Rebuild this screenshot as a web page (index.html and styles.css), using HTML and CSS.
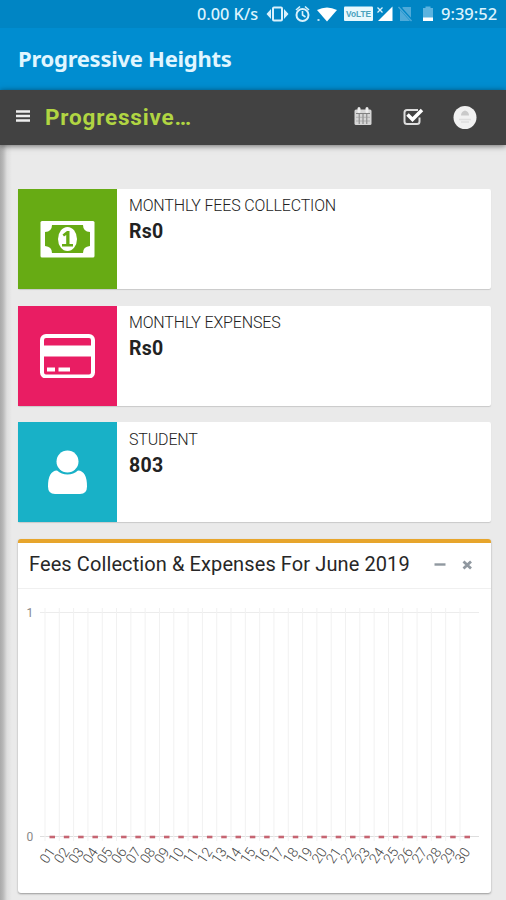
FILE: index.html
```html
<!DOCTYPE html>
<html lang="en">
<head>
<meta charset="utf-8">
<title>Progressive Heights</title>
<link rel="stylesheet" href="styles.css">
</head>
<body>
<div class="statusbar">
  <span class="speed">0.00 K/s</span>
  <svg class="status-icons" width="170" height="28" viewBox="266 0 170 28">
    <g fill="none" stroke="#d9f1fc" stroke-width="2">
      <rect x="273" y="7.500" width="9" height="13" rx="1"/>
      <circle cx="302.500" cy="15" r="6"/>
      <path d="M302.500 11v4l3 2M296 10l4-3.500M309 10l-4-3.500" stroke-width="1.600"/>
    </g>
    <path d="M271 9v10l-4.500-5zM284 9v10l4.500-5z" fill="#d9f1fc"/>
    <path d="M317 10q10-5 20 0L327 21.500z" fill="#fff"/>
    <rect x="317.500" y="19" width="2" height="2" fill="#b8e0f3"/>
    <rect x="344" y="6.500" width="29" height="14.500" rx="1" fill="#e8f8fd"/>
    <text x="346" y="17" class="volte" textLength="25" lengthAdjust="spacingAndGlyphs">VoLTE</text>
    <path d="M392.500 6.500V21H378z" fill="#fff"/>
    <path d="M377.500 7.500l5 5m0-5l-5 5" stroke="#d9f1fc" stroke-width="1.300"/>
    <path d="M403 7h8v14h-11V10z" fill="#4eaad9"/>
    <path d="M398.500 6l13.500 15" stroke="#0085c4" stroke-width="3"/>
    <path d="M398.500 7l13 14" stroke="#4eaad9" stroke-width="1.300"/>
    <path d="M423 8h2.500V6.500h5V8h2.500v10h-10z" fill="#5cb3df"/>
    <rect x="423" y="17.500" width="10" height="3.500" fill="#fff"/>
  </svg>
  <span class="clock">9:39:52</span>
</div>
<header class="appbar">Progressive Heights</header>
<nav class="navbar">
  <svg class="menu" width="14" height="14" viewBox="0 0 14 14"><path d="M0 1.500h14M0 6h14M0 10.500h14" stroke="#eee" stroke-width="2.400"/></svg>
  <span class="brand">Progressive…</span>
  <svg class="nav-icons" width="124" height="26" viewBox="354 104 124 26">
    <rect x="354.500" y="109.500" width="17" height="15.500" rx="1.500" fill="#d6d6d6"/>
    <path d="M359 108.500v3M367 108.500v3" stroke="#eee" stroke-width="3" stroke-linecap="round"/>
    <path d="M356 113.500h14M359.200 114v10M363 114v10M366.800 114v10" stroke="#777" stroke-width=".9"/>
    <path d="M356 117.300h14M356 121h14" stroke="#999" stroke-width=".6"/>
    <path d="M419.500 117.500v4q0 2.500-2.500 2.500h-10q-2.500 0-2.500-2.500v-9q0-2.500 2.500-2.500h11" fill="none" stroke="#ddd" stroke-width="2"/>
    <path d="M407.500 114.500l5 5 9.500-9.500" fill="none" stroke="#fff" stroke-width="3.500"/>
    <circle cx="465" cy="117.500" r="11.500" fill="#f1f1f1"/>
    <path d="M461 115.500q0-4 4-5 4 1 4 5z" fill="#c9c9c9"/>
    <path d="M459 119.500h12M461 122h8" stroke="#dedede" stroke-width="1.500"/>
  </svg>
</nav>
<main class="content">
  <section class="card">
    <div class="tile green">
      <svg width="56" height="38" viewBox="0 0 56 38">
        <rect x=".5" y="1" width="54" height="36.500" rx="1.500" fill="#fff"/>
        <path d="M12 5h31q0 6.500 7 7v14q-7 .5-7 7H12q0-6.500-7-7V12q7-.5 7-7z" fill="#67ab14"/>
        <ellipse cx="27.500" cy="19" rx="9.500" ry="12" fill="#fff"/>
        <path d="M22.500 14.500l4.500-3.500h2.500V24H33v2.500H22V24h4.200v-9L24 16.500z" fill="#67ab14"/>
      </svg>
    </div>
    <div class="info"><span class="label">MONTHLY FEES COLLECTION</span><strong>Rs0</strong></div>
  </section>
  <section class="card">
    <div class="tile pink">
      <svg width="56" height="44" viewBox="0 0 56 44">
        <rect x="2" y="2" width="51" height="40.500" rx="4" fill="none" stroke="#fff" stroke-width="4"/>
        <path d="M3 11.500h49v11H3zM7 33.500h8v4H7zM18.500 33.500H30v4H18.500z" fill="#fff"/>
      </svg>
    </div>
    <div class="info"><span class="label">MONTHLY EXPENSES</span><strong>Rs0</strong></div>
  </section>
  <section class="card">
    <div class="tile teal">
      <svg width="40" height="44" viewBox="0.500 0 40 44">
        <path d="M9.500 20.500Q14 24.500 20 24.500T30.500 20.500Q39.500 21 39.500 36.500 39.500 44 32.500 44h-25Q.5 44 .5 36.500.5 21 9.500 20.500z" fill="#fff"/>
        <circle cx="20" cy="11.500" r="11" fill="#fff"/>
      </svg>
    </div>
    <div class="info"><span class="label">STUDENT</span><strong>803</strong></div>
  </section>
  <section class="panel">
    <div class="panel-head">
      <h2>Fees Collection &amp; Expenses For June 2019</h2>
      <svg width="40" height="14" viewBox="434 558 40 14"><path d="M434.500 564.500h11" stroke="#9098a0" stroke-width="2.400"/><path d="M463.500 561.500l7.500 7m0-7l-7.500 7" stroke="#9098a0" stroke-width="2.800"/></svg>
    </div>
    <svg id="chart" width="473" height="303" viewBox="18 589 473 303">
      <path d="M40 612.500h439" stroke="#ececec"/>
      <path d="M40 836.500h439" stroke="#dedede"/>
      <text class="axis" x="26.500" y="617">1</text>
      <text class="axis" x="26.500" y="840.500">0</text>
    </svg>
  </section>
</main>
<script src="chart.js"></script>
</body>
</html>
```
FILE: styles.css
```css
* { box-sizing: border-box; }
body { margin: 0; height: 900px; overflow: hidden; background: #eaeaea; font-family: Roboto, sans-serif; color: #222; }
.statusbar { height: 28px; background: #0085c4; display: flex; align-items: center; color: #dcf3fd; font: 500 16.5px/28px "Noto Sans", sans-serif; white-space: nowrap; padding-left: 197px; }
.speed { width: 69px; font-size: 16.3px; }
.status-icons { flex: none; }
.clock { margin-left: 5px; font-size: 16.5px; }
.volte { font: 700 8.5px "Liberation Sans", sans-serif; fill: #4aa2bd; }
.appbar { height: 62px; background: #008dd0; color: #e0f6ff; font: 700 22px/61px "Noto Sans", sans-serif; letter-spacing: -.27px; padding-left: 18px; white-space: nowrap; }
.navbar { position: relative; height: 55px; background: #424242; display: flex; align-items: center; padding: 0 28px 1px 16px; box-shadow: 0 1px 6px rgba(0,0,0,.55); }
.menu { margin-right: 15px; }
.brand { font-weight: 700; font-size: 22.5px; letter-spacing: .8px; color: #b1d542; }
.nav-icons { margin-left: auto; }
.content { height: 755px; padding: 44px 15px 0 18px; background: linear-gradient(90deg, #a9a9a9 0, #b8b8b8 3px, #dedede 7px, #eaeaea 12px); }
.card { height: 100px; margin-bottom: 16.7px; background: #fff; display: flex; border-radius: 2px; box-shadow: 0 1px 1px rgba(0,0,0,.14); }
.tile { width: 99px; flex: none; display: grid; place-items: center; }
.green { background: #67ab14; }
.pink { background: #e91d63; }
.teal { background: #18b1c7; }
.info { padding: 7.3px 0 0 12px; display: flex; flex-direction: column; }
.label { font-size: 16px; line-height: 20px; font-weight: 300; letter-spacing: -.16px; color: #222; white-space: nowrap; }
.info strong { font-size: 19.5px; line-height: 24px; margin-top: 4px; font-weight: 700; letter-spacing: .3px; }
.panel { height: 354px; background: #fff; border-top: 4px solid #e7a52c; border-radius: 3px; box-shadow: 0 1px 2px rgba(0,0,0,.35); }
.panel-head { height: 46px; border-bottom: 1px solid #f0f0f0; display: flex; align-items: center; justify-content: space-between; padding: 0 17px 2px 11px; }
h2 { margin: 0 0 2px; font-size: 20px; font-weight: 400; letter-spacing: .1px; white-space: nowrap; color: #272727; }
#chart { display: block; }
.axis { font-size: 12px; fill: #888; }
.tick { font-size: 14px; font-weight: 300; fill: #444; }
```
FILE: chart.js
```js
const chart = document.getElementById('chart');
function add(tag, attrs, text) {
  const el = document.createElementNS('http://www.w3.org/2000/svg', tag);
  for (const key in attrs) el.setAttribute(key, attrs[key]);
  if (text) el.textContent = text;
  chart.appendChild(el);
}
const step = 14.31;
for (let day = 1; day <= 30; day++) {
  const x = 45 + (day - 1) * step;
  add('path', { d: `M${x} 608V841`, stroke: '#f1f1f1' });
  add('path', { d: `M${x + 4.5} 837h5.5`, stroke: '#c66572', 'stroke-width': 2.6 });
  add('text', { class: 'tick', x: x + 8.5, y: 855, 'text-anchor': 'end', transform: `rotate(-56 ${x + 8.5} 855)`, dx: 4 }, String(day).padStart(2, '0'));
}
```
